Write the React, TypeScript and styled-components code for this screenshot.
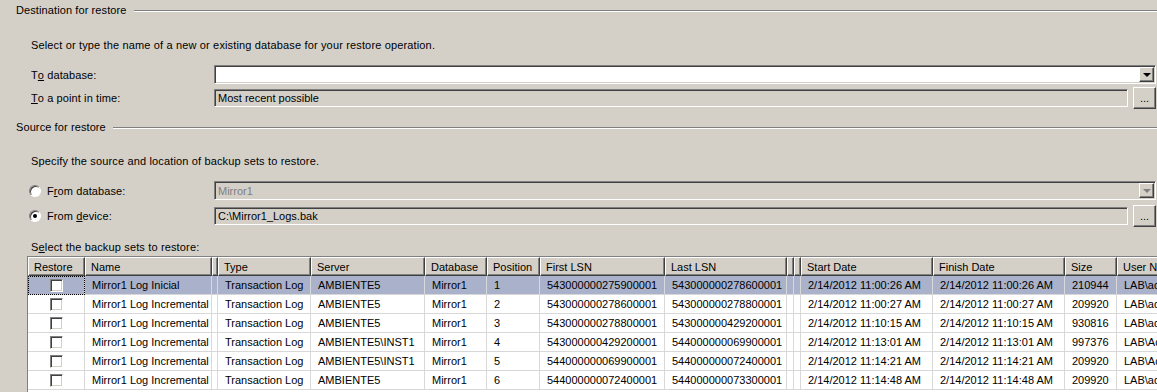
import React from 'react';
import styled, { createGlobalStyle, css } from 'styled-components';

const GlobalStyle = createGlobalStyle`
  html, body {
    margin: 0;
    padding: 0;
    background: #d4d0c8;
    overflow: hidden;
  }
  body {
    font-family: "Liberation Sans", Arial, sans-serif;
    font-size: 11px;
    color: #000;
  }
`;

const sunken = css`
  border-style: solid;
  border-width: 1px;
  border-color: #808080 #fff #fff #808080;
  box-shadow: inset 1px 1px 0 #404040, inset -1px -1px 0 #d4d0c8;
`;

const raised = css`
  border-style: solid;
  border-width: 1px;
  border-color: #fff #404040 #404040 #fff;
  box-shadow: inset -1px -1px 0 #808080;
`;

const Page = styled.div`
  width: 1157px;
  height: 392px;
  overflow: hidden;
  display: flex;
  flex-direction: column;
`;

const GroupTitle = styled.div<{ $top: number }>`
  display: flex;
  align-items: center;
  gap: 7px;
  padding: ${p => p.$top}px 0 0 16px;
  height: 13px;
  line-height: 13px;
  letter-spacing: 0.1px;

  &::after {
    content: '';
    flex: 1;
    margin-top: 1px;
    border-top: 1px solid #808080;
    border-bottom: 1px solid #fff;
  }
`;

const Hint = styled.div<{ $top: number }>`
  padding: ${p => p.$top}px 0 0 31px;
  height: 13px;
  line-height: 13px;
  letter-spacing: 0.15px;
`;

const FieldRow = styled.div<{ $top: number }>`
  display: grid;
  grid-template-columns: 214px 1fr auto;
  align-items: center;
  margin-top: ${p => p.$top}px;
  min-height: 19px;
`;

const Label = styled.label`
  padding-left: 31px;
  display: flex;
  align-items: center;
  letter-spacing: 0.1px;
`;

const RadioLabel = styled(Label)`
  padding-left: 29px;
  gap: 6px;
`;

const Radio = styled.span<{ $checked?: boolean }>`
  position: relative;
  width: 12px;
  height: 12px;
  box-sizing: border-box;
  border-radius: 50%;
  background: #fff;
  border: 1px solid;
  border-color: #808080 #fff #fff #808080;
  box-shadow: inset 1px 1px 0 #404040;

  &::after {
    content: '';
    display: ${p => (p.$checked ? 'block' : 'none')};
    position: absolute;
    left: 3px;
    top: 3px;
    width: 4px;
    height: 4px;
    border-radius: 50%;
    background: #000;
  }
`;

const Combo = styled.div<{ $disabled?: boolean }>`
  ${sunken};
  grid-column: 2 / 4;
  margin-right: 1px;
  height: 19px;
  box-sizing: border-box;
  background: ${p => (p.$disabled ? '#d4d0c8' : '#fff')};
  color: ${p => (p.$disabled ? '#808080' : '#000')};
  display: flex;
  align-items: center;
  padding-left: 3px;
`;

const ComboText = styled.span`
  flex: 1;
`;

const DropButton = styled.span<{ $disabled?: boolean }>`
  ${raised};
  width: 15px;
  height: 15px;
  box-sizing: border-box;
  margin-right: 1px;
  background: #d4d0c8;
  display: flex;
  align-items: center;
  justify-content: center;

  &::after {
    content: '';
    border-left: 4px solid transparent;
    border-right: 4px solid transparent;
    border-top: 4px solid ${p => (p.$disabled ? '#808080' : '#000')};
    margin-top: 1px;
  }
`;

const TextBox = styled.div`
  ${sunken};
  height: 18px;
  box-sizing: border-box;
  background: #d4d0c8;
  display: flex;
  align-items: center;
  padding-left: 3px;
  color: #000;
`;

const EllipsisButton = styled.button`
  ${raised};
  width: 23px;
  height: 22px;
  margin-left: 5px;
  margin-right: 1px;
  padding: 0 0 4px;
  background: #d4d0c8;
  font: inherit;
  font-size: 11px;
  display: flex;
  align-items: flex-end;
  justify-content: center;
  line-height: 11px;
`;

const U = styled.span`
  text-decoration: underline;
`;

const GridFrame = styled.div`
  margin: 2px 0 0 27px;
  flex: 1;
  overflow: hidden;
  border-left: 1px solid #808080;
  border-top: 1px solid #808080;
  background: #fff;
`;

const Table = styled.table<{ $width: number }>`
  border-collapse: separate;
  border-spacing: 0;
  table-layout: fixed;
  width: ${p => p.$width}px;
`;

const HeadCell = styled.th`
  ${raised};
  height: 19px;
  box-sizing: border-box;
  background: #d4d0c8;
  font-weight: normal;
  text-align: left;
  padding: 0 0 0 5px;
  white-space: nowrap;
  overflow: hidden;
`;

const Row = styled.tr<{ $selected?: boolean }>`
  background: ${p => (p.$selected ? '#aab2cb' : '#fff')};
`;

const Cell = styled.td`
  height: 19px;
  box-sizing: border-box;
  padding: 0 0 0 7px;
  border-right: 1px solid #d8d8d8;
  border-bottom: 1px solid #d8d8d8;
  white-space: nowrap;
  overflow: hidden;
`;

const CheckCell = styled(Cell)<{ $focus?: boolean }>`
  padding: 0;
  text-align: center;
  ${p =>
    p.$focus &&
    css`
      outline: 1px dotted #000;
      outline-offset: -1px;
    `}
`;

const CheckBox = styled.span`
  display: inline-block;
  vertical-align: middle;
  width: 13px;
  height: 13px;
  box-sizing: border-box;
  background: #fff;
  border: 1px solid;
  border-color: #808080 #fff #fff #808080;
  box-shadow: inset 1px 1px 0 #404040, inset -1px -1px 0 #d4d0c8;
`;

const columns: [string, number][] = [
  ['Restore', 57],
  ['Name', 127],
  ['', 6],
  ['Type', 93],
  ['Server', 114],
  ['Database', 62],
  ['Position', 53],
  ['First LSN', 125],
  ['Last LSN', 122],
  ['', 7],
  ['', 7],
  ['Start Date', 132],
  ['Finish Date', 132],
  ['Size', 52],
  ['User Name', 90],
];

const tableWidth = columns.reduce((sum, [, w]) => sum + w, 0);

const rows = [
  ['Mirror1 Log Inicial', 'AMBIENTE5', '1', '543000000275900001', '543000000278600001', '2/14/2012 11:00:26 AM', '210944', 'LAB\\administrator'],
  ['Mirror1 Log Incremental', 'AMBIENTE5', '2', '543000000278600001', '543000000278800001', '2/14/2012 11:00:27 AM', '209920', 'LAB\\administrator'],
  ['Mirror1 Log Incremental', 'AMBIENTE5', '3', '543000000278800001', '543000000429200001', '2/14/2012 11:10:15 AM', '930816', 'LAB\\administrator'],
  ['Mirror1 Log Incremental', 'AMBIENTE5\\INST1', '4', '543000000429200001', '544000000069900001', '2/14/2012 11:13:01 AM', '997376', 'LAB\\Administrator'],
  ['Mirror1 Log Incremental', 'AMBIENTE5\\INST1', '5', '544000000069900001', '544000000072400001', '2/14/2012 11:14:21 AM', '209920', 'LAB\\Administrator'],
  ['Mirror1 Log Incremental', 'AMBIENTE5', '6', '544000000072400001', '544000000073300001', '2/14/2012 11:14:48 AM', '209920', 'LAB\\administrator'],
];

export default function App() {
  return (
    <Page>
      <GlobalStyle />
      <GroupTitle $top={4}>Destination for restore</GroupTitle>
      <Hint $top={22}>Select or type the name of a new or existing database for your restore operation.</Hint>
      <FieldRow $top={13}>
        <Label>
          T<U>o</U>&nbsp;database:
        </Label>
        <Combo>
          <ComboText />
          <DropButton />
        </Combo>
      </FieldRow>
      <FieldRow $top={3}>
        <Label>
          <U>T</U>o a point in time:
        </Label>
        <TextBox>Most recent possible</TextBox>
        <EllipsisButton>...</EllipsisButton>
      </FieldRow>
      <GroupTitle $top={12}>Source for restore</GroupTitle>
      <Hint $top={21}>Specify the source and location of backup sets to restore.</Hint>
      <FieldRow $top={13}>
        <RadioLabel>
          <Radio />
          <span>
            F<U>r</U>om database:
          </span>
        </RadioLabel>
        <Combo $disabled>
          <ComboText>Mirror1</ComboText>
          <DropButton $disabled />
        </Combo>
      </FieldRow>
      <FieldRow $top={5}>
        <RadioLabel>
          <Radio $checked />
          <span>
            From <U>d</U>evice:
          </span>
        </RadioLabel>
        <TextBox>C:\Mirror1_Logs.bak</TextBox>
        <EllipsisButton>...</EllipsisButton>
      </FieldRow>
      <Hint $top={14}>
        S<U>e</U>lect the backup sets to restore:
      </Hint>
      <GridFrame>
        <Table $width={tableWidth}>
          <colgroup>
            {columns.map(([, w], i) => (
              <col key={i} style={{ width: w }} />
            ))}
          </colgroup>
          <thead>
            <tr>
              {columns.map(([name], i) => (
                <HeadCell key={i}>{name}</HeadCell>
              ))}
            </tr>
          </thead>
          <tbody>
            {rows.map((r, i) => (
              <Row key={i} $selected={i === 0}>
                <CheckCell $focus={i === 0}>
                  <CheckBox />
                </CheckCell>
                <Cell>{r[0]}</Cell>
                <Cell />
                <Cell>Transaction Log</Cell>
                <Cell>{r[1]}</Cell>
                <Cell>Mirror1</Cell>
                <Cell>{r[2]}</Cell>
                <Cell>{r[3]}</Cell>
                <Cell>{r[4]}</Cell>
                <Cell />
                <Cell />
                <Cell>{r[5]}</Cell>
                <Cell>{r[5]}</Cell>
                <Cell>{r[6]}</Cell>
                <Cell>{r[7]}</Cell>
              </Row>
            ))}
          </tbody>
        </Table>
      </GridFrame>
    </Page>
  );
}
